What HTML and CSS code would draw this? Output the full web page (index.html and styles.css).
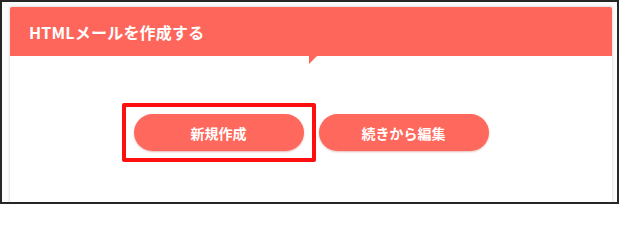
FILE: index.html
```html
<!DOCTYPE html>
<html lang="ja">
<head>
<meta charset="utf-8">
<link rel="stylesheet" href="styles.css">
</head>
<body>
<div class="frame">
  <div class="card">
    <div class="card-header">
      <h1 class="title">HTMLメールを作成する</h1>
      <span class="notch"></span>
    </div>
    <div class="card-body">
      <div class="actions">
        <div class="btn-wrap">
          <button class="btn">新規作成</button>
          <span class="highlight"></span>
        </div>
        <button class="btn">続きから編集</button>
      </div>
    </div>
  </div>
</div>
</body>
</html>
```
FILE: styles.css
```css
html, body {
  margin: 0;
  padding: 0;
  background: #ffffff;
}
body {
  font-family: "Noto Sans CJK JP", "Noto Sans", sans-serif;
}
.frame {
  box-sizing: border-box;
  width: 619px;
  height: 204px;
  border: 2px solid #262626;
  padding: 5px 5px 0 8px;
  background: #fbfbfb;
  overflow: hidden;
}
.card {
  background: #ffffff;
  height: 100%;
  box-shadow: 0 0 2px 1px #e2e2e2;
  border-radius: 2px 2px 0 0;
}
.card-header {
  position: relative;
  height: 49px;
  background: #ff665b;
  display: flex;
  align-items: center;
  padding-left: 19px;
  border-radius: 2px 2px 0 0;
}
.title {
  margin: 0;
  color: #ffffff;
  font-size: 16px;
  font-weight: bold;
  line-height: 1;
  letter-spacing: 0.2px;
}
.notch {
  position: absolute;
  left: 299px;
  top: 49px;
  width: 0;
  height: 0;
  border-top: 8px solid #ff665b;
  border-right: 8px solid transparent;
}
.card-body {
  padding-top: 58px;
}
.actions {
  display: flex;
  justify-content: center;
  gap: 15px;
}
.btn-wrap {
  position: relative;
  display: flex;
}
.btn {
  width: 170px;
  height: 37px;
  border: none;
  border-radius: 19px;
  background: #ff685c;
  color: #ffffff;
  font-family: "Noto Sans CJK JP", "Noto Sans", sans-serif;
  font-size: 14px;
  font-weight: bold;
  box-shadow: 0 1px 2px rgba(180, 60, 50, 0.35);
  padding: 0;
  cursor: pointer;
}
.highlight {
  position: absolute;
  left: -12px;
  top: -11px;
  right: -12px;
  bottom: -11px;
  border: 4px solid #ff1010;
  border-radius: 2px;
  pointer-events: none;
}
```
